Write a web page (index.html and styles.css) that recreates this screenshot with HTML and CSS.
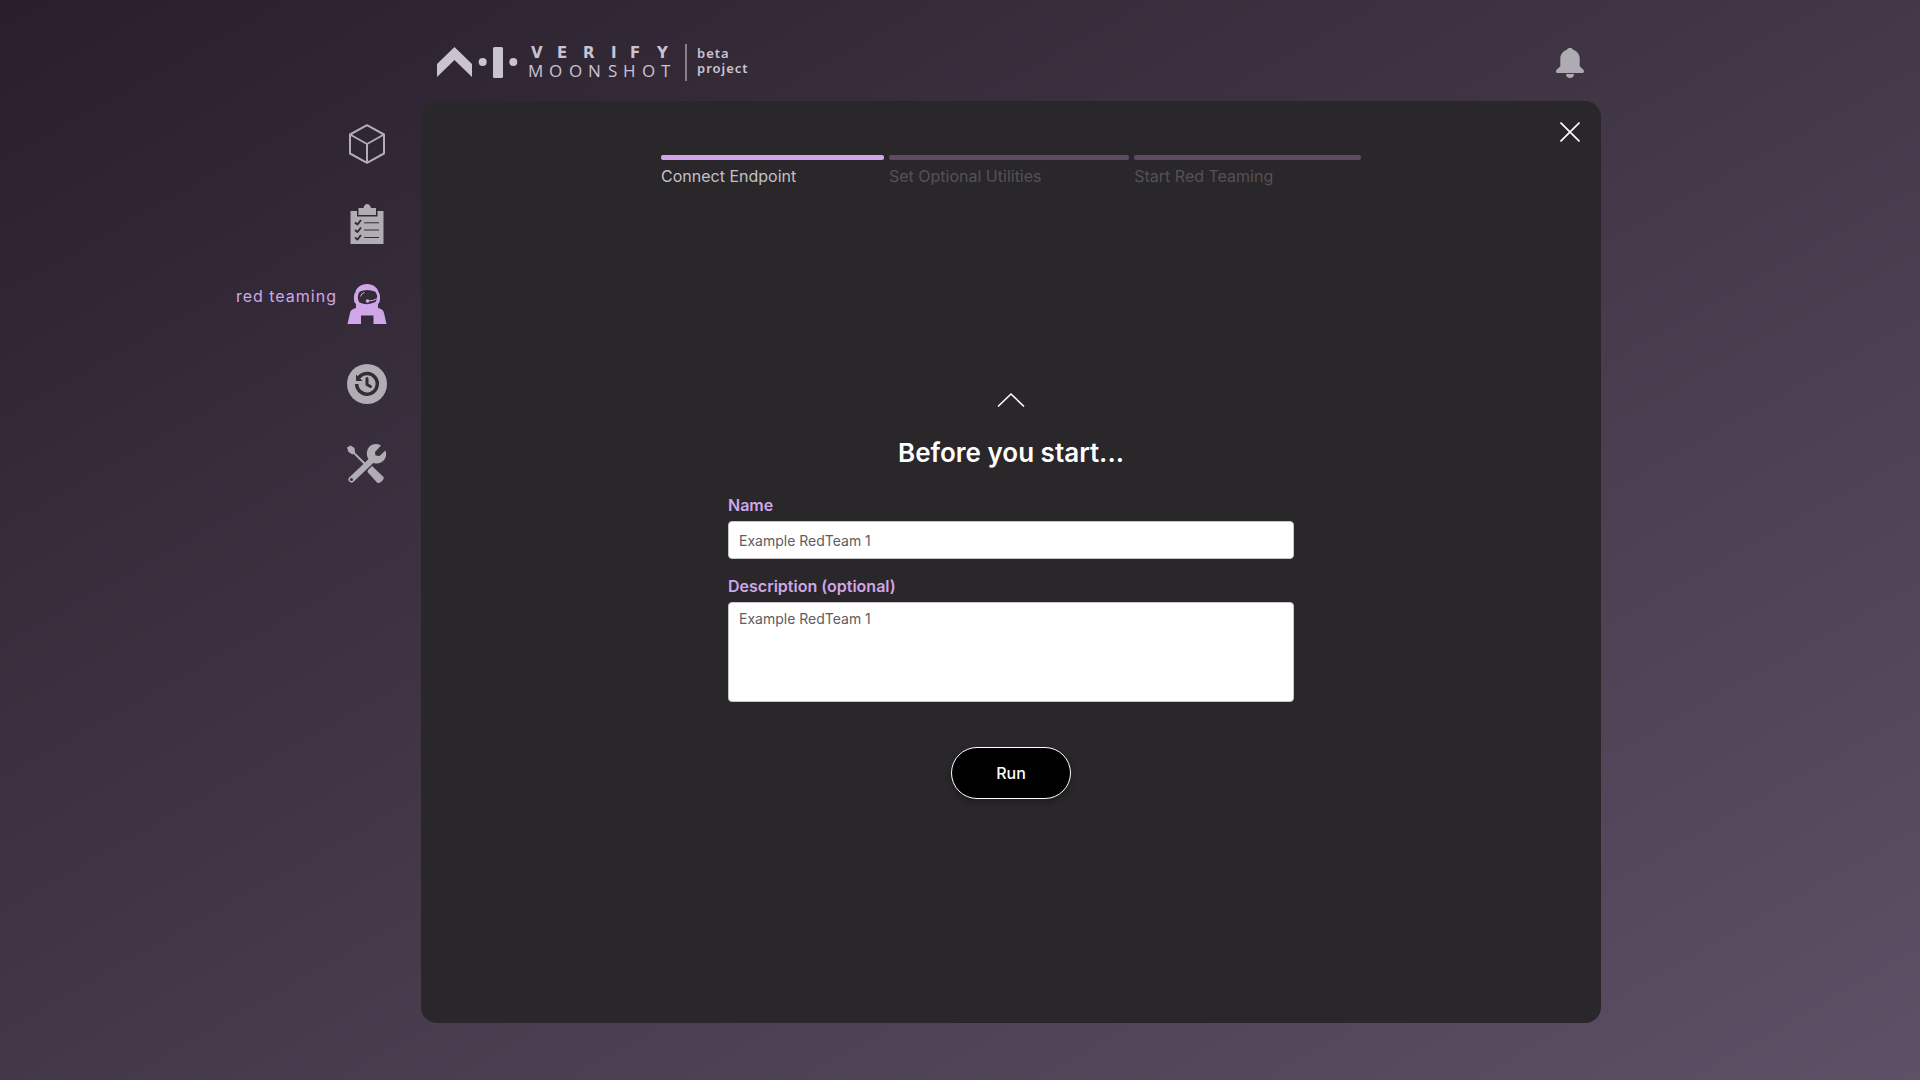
FILE: index.html
```html
<!DOCTYPE html>
<html lang="en">
<head>
<meta charset="utf-8">
<meta name="viewport" content="width=device-width, initial-scale=1">
<title>AI Verify Moonshot</title>
<link rel="stylesheet" href="styles.css">
</head>
<body>
<div class="page">
  <header class="topbar">
    <a class="logo" href="#" aria-label="AI Verify Moonshot, beta project">
      <svg viewBox="0 0 320 40" width="320" height="40" aria-hidden="true">
        <g class="logo-shape">
          <path d="M0 21 17.500 4 35 21V34L17.500 17 0 34Z"/>
          <circle cx="45.700" cy="19" r="4"/>
          <rect x="56" y="4" width="10" height="31" rx="1.500"/>
          <circle cx="76.300" cy="19" r="4"/>
        </g>
        <path class="logo-rule" d="M249 1V38"/>
        <g class="logo-bold">
          <text x="94" y="15">V</text><text x="120" y="15">E</text><text x="146" y="15">R</text><text x="174" y="15">I</text><text x="193" y="15">F</text><text x="220" y="15">Y</text>
        </g>
        <g class="logo-light">
          <text x="91" y="34">M</text><text x="112" y="34">O</text><text x="132" y="34">O</text><text x="151" y="34">N</text><text x="171" y="34">S</text><text x="186" y="34">H</text><text x="205" y="34">O</text><text x="224" y="34">T</text>
        </g>
        <g class="logo-note">
          <text x="260" y="15">beta</text><text x="260" y="30">project</text>
        </g>
      </svg>
    </a>
    <button class="icon-button bell" type="button" aria-label="Notifications">
      <svg viewBox="0 0 28 30" width="28" height="30" aria-hidden="true"><path d="M14 0c1.800 0 2.600.700 3 1.700 4 1.300 6.700 4.500 6.700 9v7.600L27.600 22c.800 1.200.200 3-1.300 3H1.700C.200 25-.400 23.200.400 22l3.900-3.700v-7.600c0-4.500 2.700-7.700 6.700-9C11.400.700 12.200 0 14 0ZM10 26h8c0 2.400-1.700 4-4 4s-4-1.600-4-4Z"/></svg>
    </button>
  </header>

  <nav class="sidebar" aria-label="Main">
    <a class="nav-link" href="#" aria-label="models">
      <svg viewBox="0 0 40 40" width="40" height="40" aria-hidden="true"><path class="line" d="M20 1.200 37 10.500V29.500L20 38.800 3 29.500V10.500ZM3 10.500 20 20 37 10.500M20 20V38.800"/></svg>
    </a>
    <a class="nav-link" href="#" aria-label="benchmarking">
      <svg viewBox="0 0 40 40" width="40" height="40" aria-hidden="true"><path d="M3.500 7H10V12.500H30.500V7H36.500V40H3.500Z"/><path d="M11.500 4H16.500C17 1.500 18.500 0 20 0S23.500 1.500 24 4H29V11H11.500Z"/><path class="cut" d="M17 18.800H32M17 26H32M17 33.500H32"/><path class="cut check" d="M8 18.500 10.500 20.500 14 16M8 26 10.500 28 14 23.500M8 33.500 10.500 35.500 14 31"/></svg>
    </a>
    <a class="nav-link active" href="#" aria-current="page">
      <span class="nav-text">red teaming</span>
      <svg viewBox="0 0 40 40" width="40" height="40" aria-hidden="true"><path d="M20 0c6.500 0 10.500 3.600 11.700 8.500 1.600 1.300 1.900 8 .3 10.500l-1 1v4c3.500.800 5.300 2 6 5L39.500 40H26.500V31.500H14V40H.500L3 29c.700-3 2.500-4.200 6-5v-4l-1-1c-1.600-2.500-1.300-9.200.300-10.500C9.500 3.600 13.500 0 20 0Z"/><path class="visor" d="M13 7.500Q20 4.500 28 7.500C31 11 30.500 15 28.500 18Q20 22 12.500 18.500C10 15 10.500 10 13 7.500Z"/><path class="mic" d="M13.500 12.500Q14 9.500 17.500 8.500M20.500 17Q26 17.500 31 14"/><circle cx="20.500" cy="17" r="1.800"/></svg>
    </a>
    <a class="nav-link" href="#" aria-label="history">
      <svg viewBox="0 0 40 40" width="40" height="40" aria-hidden="true"><circle cx="20" cy="20" r="20"/><path class="cut ring" d="M11.500 14A10.300 10.300 0 1 1 9.700 20"/><path class="hole" d="M9 10.500V17H15.500Z"/><path class="cut hand" d="M20 14.500V20.500L23.500 22.500"/></svg>
    </a>
    <a class="nav-link" href="#" aria-label="utilities">
      <svg viewBox="0 0 40 40" width="40" height="40" aria-hidden="true"><path class="shaft" d="M5 7 20 22"/><path d="M0 3.500 3.500 1.500 7.500 4 8 8.500 5.500 10.500 1.500 8Z"/><path d="M21 26 25 22 36.500 33Q37.500 34.500 35 37 32 40 30 38.500L20.500 28Z"/><path class="handle" d="M4.500 35.500 24 17"/><path d="M34 1.500 28 8 28.500 11.500 32.500 12 38.500 6.500C41 13 36 20 29 19.500 23 19 19 13.500 20 8 21 1 28-2 34 1.500Z"/><circle class="hole" cx="4.500" cy="35.500" r="1.500"/></svg>
    </a>
  </nav>

  <main class="panel">
    <button class="icon-button close" type="button" aria-label="Close">
      <svg viewBox="0 0 20 20" width="20" height="20" aria-hidden="true"><path d="M.500.500 19.500 19.500M19.500.500.500 19.500"/></svg>
    </button>
    <ol class="steps">
      <li class="step current" aria-current="step">Connect Endpoint</li>
      <li class="step">Set Optional Utilities</li>
      <li class="step">Start Red Teaming</li>
    </ol>
    <form class="form">
      <button class="icon-button back" type="button" aria-label="Previous step">
        <svg viewBox="0 0 28 16" width="28" height="16" aria-hidden="true"><path d="M1 14.500 14 2 27 14.500"/></svg>
      </button>
      <h1 class="title">Before you start...</h1>
      <div class="field">
        <label class="label" for="name">Name</label>
        <input class="control" id="name" type="text" placeholder="Example RedTeam 1">
      </div>
      <div class="field">
        <label class="label" for="description">Description (optional)</label>
        <textarea class="control area" id="description" placeholder="Example RedTeam 1"></textarea>
      </div>
      <button class="run" type="submit">Run</button>
    </form>
  </main>
</div>
</body>
</html>
```
FILE: styles.css
```css
* {
  box-sizing: border-box;
}

body {
  margin: 0;
  min-height: 100vh;
  font: 16px/24px Inter, "Liberation Sans", sans-serif;
  color: #fff;
  background: linear-gradient(to bottom right, #281f2a, #5e5066) no-repeat;
}

.page {
  display: grid;
  grid-template-columns: minmax(140px, 387px) minmax(0, 1180px);
  grid-template-rows: 101px 1fr;
  column-gap: 34px;
  min-height: 100vh;
  padding-bottom: 57px;
}

.topbar {
  grid-column: 2;
  display: flex;
  align-items: center;
  justify-content: space-between;
  padding: 25px 17px 0 16px;
}

.logo {
  display: flex;
}

.logo-shape,
.logo-bold,
.logo-light,
.logo-note {
  fill: #c9c4d0;
}

.logo-rule {
  stroke: #87808c;
  stroke-width: 2;
}

.logo-bold {
  font: 700 15px "DejaVu Sans", sans-serif;
}

.logo-light {
  font: 400 17px "Open Sans", sans-serif;
}

.logo-note {
  font: 600 13px "Noto Sans", sans-serif;
  letter-spacing: 1px;
}

.icon-button {
  display: flex;
  padding: 0;
  border: 0;
  background: none;
  fill: none;
  stroke: #fff;
  stroke-width: 1.6;
  cursor: pointer;
}

.bell {
  fill: #aeabb2;
  stroke: none;
}

.sidebar {
  display: flex;
  flex-direction: column;
  align-items: flex-end;
  gap: 40px;
  padding-top: 23px;
}

.nav-link {
  display: flex;
  gap: 10px;
  fill: #b0adb4;
  color: #cfa6e8;
  text-decoration: none;
}

.nav-link.active {
  fill: #cfa6e8;
}

.nav-text {
  letter-spacing: 1px;
}

.line,
.cut,
.visor,
.mic,
.shaft,
.handle {
  fill: none;
  stroke: #b0adb4;
  stroke-width: 2;
  stroke-linejoin: round;
}

.cut {
  stroke: #342b37;
  stroke-width: 1;
}

.check {
  stroke-width: 2;
}

.ring {
  stroke-width: 3.5;
}

.hand {
  stroke-width: 3;
  stroke-linecap: round;
}

.hole,
.visor {
  fill: #342b37;
  stroke: none;
}

.mic {
  stroke: #cfa6e8;
  stroke-width: 1;
}

.handle {
  stroke-width: 6;
  stroke-linecap: round;
}

.panel {
  position: relative;
  display: flex;
  flex-direction: column;
  align-items: center;
  padding: 54px 16px;
  border-radius: 16px;
  background: #29272a;
}

.close {
  position: absolute;
  top: 21px;
  right: 21px;
}

.steps {
  display: flex;
  gap: 5px;
  width: 100%;
  max-width: 700px;
  margin: 0;
  padding: 0;
  list-style: none;
}

.step {
  flex: 1 1 auto;
  color: #555157;
}

.step::before {
  content: "";
  display: block;
  height: 5px;
  margin-bottom: 4px;
  border-radius: 2px;
  background: #5c4c62;
}

.step.current {
  color: #c3c0c6;
}

.step.current::before {
  background: #cfa6e8;
}

.form {
  display: flex;
  flex-direction: column;
  align-items: center;
  width: 100%;
  max-width: 566px;
  margin-top: 204px;
}

.title {
  margin: 27px 0 22px;
  font-size: 26px;
  line-height: 36px;
  font-weight: 600;
}

.field {
  display: flex;
  flex-direction: column;
  gap: 4px;
  width: 100%;
  margin-bottom: 15px;
}

.label {
  color: #cfa6e8;
  font-weight: 600;
}

.control {
  width: 100%;
  height: 38px;
  padding: 6px 10px;
  border: 1px solid #c8c5c9;
  border-radius: 4px;
  background: #fff;
  color: #29272a;
  font: 14px/20px Inter, "Liberation Sans", sans-serif;
}

.control::placeholder {
  color: #5e5c5f;
  opacity: 1;
}

.area {
  height: 100px;
  resize: none;
}

.run {
  width: 120px;
  height: 52px;
  margin-top: 30px;
  border: 1px solid #fff;
  border-radius: 26px;
  background: #000;
  color: #fff;
  font: 500 16px/24px Inter, "Liberation Sans", sans-serif;
  box-shadow: 0 3px 6px rgb(0 0 0 / 30%);
  cursor: pointer;
}
```
